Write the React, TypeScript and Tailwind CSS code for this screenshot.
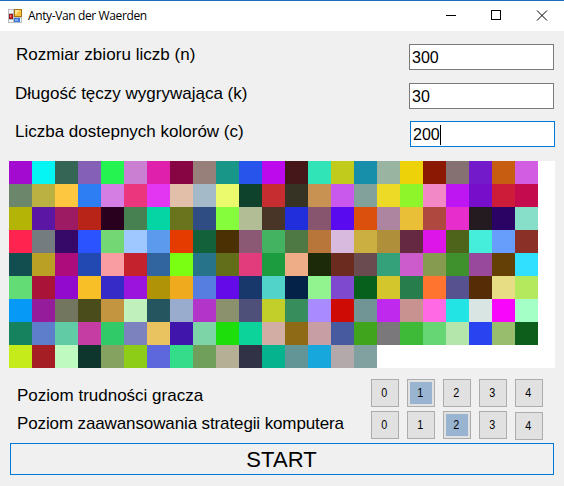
import React from "react";

const COLORS: string[][] = [
  ["#a30bd0", "#04f5f3", "#356554", "#8560b7", "#24f350", "#cb7fd2", "#df20ac", "#860542", "#968079", "#189789", "#2754eb", "#bd0aed", "#461719", "#30e4b8", "#c0cb1c", "#178faa", "#9ab4a2", "#edd109", "#8b1803", "#857072", "#731bcb", "#c75d10", "#d25de2"],
  ["#6c866b", "#bbb042", "#fdc73f", "#2c7ef2", "#d47ee3", "#eb367e", "#e236f2", "#e2bfa8", "#a5bac9", "#ebf96d", "#0f422d", "#c62d30", "#363224", "#c89253", "#c959ec", "#82a19a", "#ecda26", "#8ef52a", "#f288c5", "#be16f3", "#770ec9", "#cd1c3a", "#c30b4e"],
  ["#b4b406", "#5b17a4", "#9c1b62", "#b82518", "#29001d", "#478151", "#05d4a5", "#69741c", "#2f4d82", "#85fd3d", "#b2bd95", "#493527", "#202fdb", "#87556e", "#5a0aef", "#dc500d", "#ae85a0", "#e9bf38", "#af4940", "#e72dcb", "#241b20", "#2a0364", "#87dfca"],
  ["#ff244f", "#757c7f", "#360969", "#2b53ff", "#73d873", "#9ec8ff", "#5b9aed", "#e53b00", "#12613a", "#4b3003", "#8c5974", "#43b261", "#4e7944", "#b9763b", "#d7badd", "#cbb041", "#af8f3a", "#662942", "#dd15e9", "#4e641a", "#45eedb", "#689efb", "#8b3027"],
  ["#124e50", "#baa125", "#ad0d7c", "#2248b1", "#fa9da2", "#c4232d", "#3065a0", "#7aff12", "#27738a", "#636e1a", "#e33c7d", "#1d9c3f", "#eead86", "#1d2a0a", "#6c2b1f", "#6a4c50", "#34a17b", "#cc5bcc", "#869b50", "#3f912e", "#99499c", "#644006", "#31dfff"],
  ["#64dc76", "#a91337", "#920ace", "#f8bf26", "#372bc8", "#9a14de", "#b09306", "#efab1d", "#567ee0", "#6409e7", "#18386b", "#51d3ca", "#042247", "#92f48e", "#7e49ce", "#08601d", "#d3c52c", "#277d4c", "#ff742f", "#58518f", "#562c07", "#e7dd84", "#b5e95d"],
  ["#0699f5", "#951c9b", "#72765f", "#4b4c1c", "#c39541", "#c0f0bb", "#25555e", "#9aaccd", "#b334c8", "#8a916c", "#4e5079", "#c2cf2b", "#388d5d", "#a98aff", "#cf0b05", "#719594", "#be29ed", "#c89291", "#ff69e4", "#22e4e5", "#d8e5e2", "#f805fc", "#a3ffc6"],
  ["#17835e", "#5e7dcb", "#60cba4", "#c53da2", "#31ca69", "#7b82be", "#e8c360", "#4015ac", "#7dd4a6", "#1ddd0b", "#0bd399", "#d2ada3", "#8e6a17", "#c79ea4", "#475aa0", "#40a51d", "#7b787b", "#3eb938", "#66d573", "#b4e5aa", "#2943f1", "#98be6d", "#0d5e1b"],
  ["#c5ec1a", "#a51e23", "#bffbc0", "#0e362c", "#86a261", "#8dcd18", "#5d68dc", "#35dc89", "#709f5c", "#b5af96", "#313246", "#05b48e", "#639596", "#18a7dc", "#b3a8aa", "#80a1a0"],
];

function AppIcon() {
  return (
    <svg width="14" height="14" viewBox="0 0 14 14" shapeRendering="crispEdges">
      <rect width="14" height="14" fill="#b9bcc0" />
      <path d="M1 1h4v3H1zM1 11h4v2H1zM12 9h1v4h-1z" fill="#f4f5f7" />
      <rect x="6" y="0" width="8" height="8" fill="#a87614" />
      <rect x="7" y="1" width="6" height="6" fill="#f6c43c" />
      <path d="M7 1h4v2H9v2H7z" fill="#ffe493" />
      <rect x="1" y="5" width="4" height="5" fill="#9b171b" />
      <rect x="2" y="6" width="2" height="3" fill="#c92b2b" />
      <rect x="2" y="6" width="1" height="2" fill="#ed8584" />
      <rect x="6" y="9" width="6" height="4" fill="#3c77d6" />
      <rect x="7" y="10" width="3" height="2" fill="#7eb0f5" />
    </svg>
  );
}

function LevelRow({ selected, lastLower }: { selected: number; lastLower?: boolean }) {
  return (
    <div className="flex gap-2">
      {[0, 1, 2, 3, 4].map((n) => (
        <button
          key={n}
          className={`size-7 border border-[#adadad] bg-[#e1e1e1] p-[2px] ${lastLower && n === 4 ? "mt-px" : ""}`}
        >
          <span
            className={`flex size-full items-center justify-center pr-px font-['Liberation_Sans',sans-serif] text-[12px] leading-none ${n === selected ? "bg-[#99b4d1]" : ""}`}
          >
            <span className="scale-x-90">{n}</span>
          </span>
        </button>
      ))}
    </div>
  );
}

const label = "whitespace-pre text-[17px] leading-5";
const field = "flex h-[26px] w-[145px] items-center border bg-white pt-px pl-[2px] text-[16px] leading-5";

export default function App() {
  return (
    <div className="h-[486px] w-[564px] overflow-hidden bg-[#f0f0f0] font-['Liberation_Sans',Arial,sans-serif] text-black">
      <header className="flex h-[31px] items-center border-t border-[#1a6fb8] bg-white pl-2">
        <AppIcon />
        <span className="ml-[6px] font-['Open_Sans',sans-serif] text-[12px] leading-4 tracking-[-0.38px]">Anty-Van der Waerden</span>
        <svg className="ml-auto" width="118" height="30" viewBox="0 0 118 30" fill="none" stroke="#000">
          <path d="M0 14.5h10M45.5 9.5h9v9h-9z" shapeRendering="crispEdges" />
          <path d="M91 9.5l10 10M101 9.5l-10 10" />
        </svg>
      </header>

      <main className="flex flex-col">
        <div className="flex h-[39px] items-end justify-between pr-[10px] pl-4">
          <span className={`${label} mb-[5px] tracking-[0.04px]`}>Rozmiar zbioru liczb (n)</span>
          <div className={`${field} border-[#7a7a7a]`}>300</div>
        </div>
        <div className="flex h-[39px] items-end justify-between pr-[10px] pl-[15px]">
          <span className={`${label} mb-[5px]`}>Długość tęczy wygrywająca (k)</span>
          <div className={`${field} border-[#7a7a7a]`}>30</div>
        </div>
        <div className="flex h-[38px] items-end justify-between pr-[9px] pl-[15px]">
          <span className={`${label} mb-[5px]`}>Liczba dostepnych kolorów (c)</span>
          <div className={`${field} border-[#0078d7]`}>
            200<span className="h-5 w-px bg-black" />
          </div>
        </div>

        <div className="mt-[14px] ml-[9px] h-[207px] w-[546px] bg-white">
          {COLORS.map((row, y) => (
            <div key={y} className="flex">
              {row.map((color, x) => (
                <div key={x} className="size-[23px]" style={{ backgroundColor: color }} />
              ))}
            </div>
          ))}
        </div>

        <div className="mt-[11px] flex h-8 items-start justify-between pr-[21px] pl-[17px]">
          <span className={`${label} mt-[7px]`}>Poziom trudności gracza</span>
          <LevelRow selected={1} />
        </div>
        <div className="flex h-8 items-start justify-between pr-[21px] pl-[17px]">
          <span className={`${label} mt-[3px] tracking-[-0.12px]`}>Poziom zaawansowania strategii komputera</span>
          <LevelRow selected={2} lastLower />
        </div>

        <button className="ml-[10px] h-8 w-[544px] border border-[#0078d7] pt-px pr-px text-[22px] leading-[29px] tracking-[0.1px]">START</button>
      </main>
    </div>
  );
}
